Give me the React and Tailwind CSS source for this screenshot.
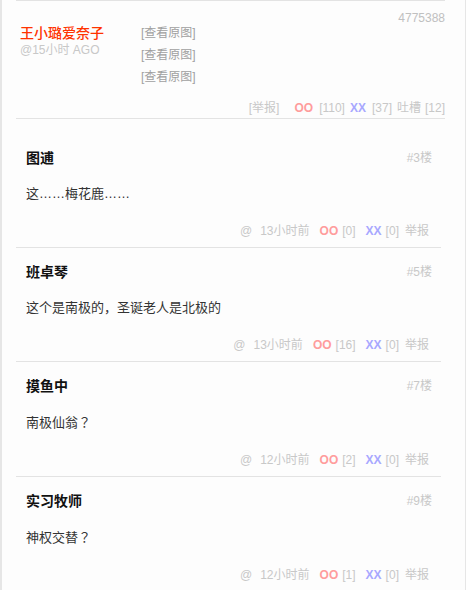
const comments = [
  { name: '图逋', floor: '#3楼', text: '这……梅花鹿……', time: '13小时前', oo: 0, xx: 0 },
  { name: '班卓琴', floor: '#5楼', text: '这个是南极的，圣诞老人是北极的', time: '13小时前', oo: 16, xx: 0 },
  { name: '摸鱼中', floor: '#7楼', text: '南极仙翁', q: true, time: '12小时前', oo: 2, xx: 0 },
  { name: '实习牧师', floor: '#9楼', text: '神权交替', q: true, time: '12小时前', oo: 1, xx: 0 },
];

function Comment({ c }) {
  return (
    <div className="border-b border-[#e3e3e3] pl-[10px]">
      <div className="flex items-center justify-between pt-[14px] pr-[9px]">
        <span className="text-[14px] leading-[20px] font-bold text-[#111]">{c.name}</span>
        <span className="text-[12px] leading-[20px] text-[#c8c8c8]">{c.floor}</span>
      </div>
      <p className="mt-[16px] text-[13px] leading-[20px] text-[#333]">
        {c.text}
        {c.q && <span style={{ fontFamily: '"Noto Sans CJK TC", sans-serif' }}>？</span>}
      </p>
      <div className="mt-[17px] pb-[6px] pr-[12px] flex justify-end items-center text-[12px] leading-[20px] text-[#c8c8c8]">
        <span className="mr-[8px]">@</span>
        <span className="mr-[10px]">{c.time}</span>
        <span className="font-bold text-[#ff9c9c]">OO</span>
        <span className="ml-[4px] mr-[10px]">[{c.oo}]</span>
        <span className="font-bold text-[#a8a8ff]">XX</span>
        <span className="ml-[4px] mr-[6px]">[{c.xx}]</span>
        <span>举报</span>
      </div>
    </div>
  );
}

export default function App() {
  return (
    <div
      className="min-h-[590px] border-l-2 border-r border-[#e6e6e6] bg-[#fdfdfd] pl-[14px] pr-5"
      style={{ fontFamily: '"Liberation Sans", "Noto Sans CJK SC", sans-serif' }}
    >
      <div className="h-[119px] border-y border-[#e3e3e3] flex flex-col">
        <div className="flex items-start pt-[9px]">
          <div className="w-[125px] pl-1 mt-[14px]">
            <div className="text-[14px] leading-[18px] font-medium text-[#ff3300]">王小璐爱奈子</div>
            <div className="text-[12px] leading-[17px] text-[#c8c8c8]">@15小时 AGO</div>
          </div>
          <div className="mt-[12px] flex flex-col text-[12px] leading-[22px] text-[#a0a0a0]">
            <span>[查看原图]</span>
            <span>[查看原图]</span>
            <span>[查看原图]</span>
          </div>
          <div className="flex-1 text-right text-[12px] leading-[16px] text-[#c0c0c0]">4775388</div>
        </div>
        <div className="mt-auto pb-[2px] flex justify-end items-center text-[12px] leading-[16px] text-[#c8c8c8]">
          <span className="mr-[15px]">[举报]</span>
          <span className="font-bold text-[#ff9c9c]">OO</span>
          <span className="ml-[6px] mr-[5px]">[110]</span>
          <span className="font-bold text-[#a8a8ff]">XX</span>
          <span className="ml-[6px] mr-[5px]">[37]</span>
          <span className="mr-[4px]">吐槽</span>
          <span>[12]</span>
        </div>
      </div>
      <div className="mt-[15px] mr-1">
        {comments.map((c) => (
          <Comment key={c.floor} c={c} />
        ))}
      </div>
    </div>
  );
}
